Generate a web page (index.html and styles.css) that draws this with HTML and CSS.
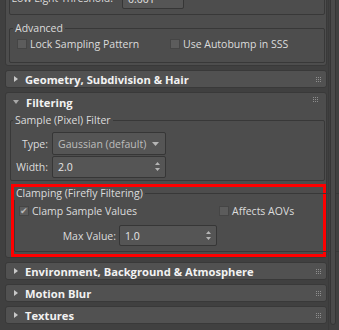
FILE: index.html
```html
<!DOCTYPE html>
<html>
<head>
<meta charset="utf-8">
<title>Render Setup - Filtering</title>
<link rel="stylesheet" href="styles.css">
</head>
<body>
<div class="panel">
	<div class="rollouts">
		<div class="rollout rollout-cut">
			<div class="group group-cut">
				<span class="label-low">Low Light Threshold:</span>
				<span class="field spinner-low">0.001</span>
			</div>
			<fieldset class="group group-advanced">
				<legend>Advanced</legend>
				<div class="check-row">
					<label class="check"><span class="box"></span>Lock Sampling Pattern</label>
					<label class="check"><span class="box"></span>Use Autobump in SSS</label>
				</div>
			</fieldset>
		</div>

		<div class="rollout header-only">
			<div class="header">
				<span class="arrow-right"></span>
				<span class="title">Geometry, Subdivision &amp; Hair</span>
				<svg class="grip" width="5" height="5" viewBox="0 0 5 5"><path d="M0 0h1v1H0zM2 0h1v1H2zM4 0h1v1H4zM0 2h1v1H0zM2 2h1v1H2zM4 2h1v1H4zM0 4h1v1H0zM2 4h1v1H2zM4 4h1v1H4z" fill="#8e8e8e"/></svg>
			</div>
		</div>

		<div class="rollout rollout-open">
			<div class="header">
				<span class="arrow-down"></span>
				<span class="title">Filtering</span>
				<svg class="grip grip-open" width="5" height="5" viewBox="0 0 5 5"><path d="M0 0h1v1H0zM2 0h1v1H2zM4 0h1v1H4zM0 2h1v1H0zM2 2h1v1H2zM4 2h1v1H4zM0 4h1v1H0zM2 4h1v1H2zM4 4h1v1H4z" fill="#8e8e8e"/></svg>
			</div>
			<fieldset class="group group-sample">
				<legend>Sample (Pixel) Filter</legend>
				<div class="form-row">
					<span class="label">Type:</span>
					<span class="field dropdown">Gaussian (default)
						<svg width="7" height="4" viewBox="0 0 7 4"><path d="M0 0h7L3.5 4z" fill="#b5b5b5"/></svg>
					</span>
				</div>
				<div class="form-row">
					<span class="label">Width:</span>
					<span class="field spinner">2.0
						<svg width="5" height="9" viewBox="0 0 5 9"><path d="M2.5 0L5 3H0z M0 6h5L2.5 9z" fill="#b5b5b5"/></svg>
					</span>
				</div>
			</fieldset>
			<div class="highlight">
				<fieldset class="group group-clamp">
					<legend>Clamping (Firefly Filtering)</legend>
					<div class="check-row">
						<label class="check"><span class="box">&#10004;</span>Clamp Sample Values</label>
						<label class="check check-aov"><span class="box"></span>Affects AOVs</label>
					</div>
					<div class="form-row max-row">
						<span class="label label-max">Max Value:</span>
						<span class="field spinner spinner-max">1.0
							<svg width="5" height="9" viewBox="0 0 5 9"><path d="M2.5 0L5 3H0z M0 6h5L2.5 9z" fill="#b5b5b5"/></svg>
						</span>
					</div>
				</fieldset>
			</div>
		</div>

		<div class="rollout header-only">
			<div class="header">
				<span class="arrow-right"></span>
				<span class="title">Environment, Background &amp; Atmosphere</span>
				<svg class="grip" width="5" height="5" viewBox="0 0 5 5"><path d="M0 0h1v1H0zM2 0h1v1H2zM4 0h1v1H4zM0 2h1v1H0zM2 2h1v1H2zM4 2h1v1H4zM0 4h1v1H0zM2 4h1v1H2zM4 4h1v1H4z" fill="#8e8e8e"/></svg>
			</div>
		</div>

		<div class="rollout header-only">
			<div class="header">
				<span class="arrow-right"></span>
				<span class="title">Motion Blur</span>
				<svg class="grip" width="5" height="5" viewBox="0 0 5 5"><path d="M0 0h1v1H0zM2 0h1v1H2zM4 0h1v1H4zM0 2h1v1H0zM2 2h1v1H2zM4 2h1v1H4zM0 4h1v1H0zM2 4h1v1H2zM4 4h1v1H4z" fill="#8e8e8e"/></svg>
			</div>
		</div>

		<div class="rollout header-only">
			<div class="header">
				<span class="arrow-right"></span>
				<span class="title">Textures</span>
				<svg class="grip" width="5" height="5" viewBox="0 0 5 5"><path d="M0 0h1v1H0zM2 0h1v1H2zM4 0h1v1H4zM0 2h1v1H0zM2 2h1v1H2zM4 2h1v1H4zM0 4h1v1H0zM2 4h1v1H2zM4 4h1v1H4z" fill="#8e8e8e"/></svg>
			</div>
		</div>
	</div>
	<div class="scrollbar">
		<div class="thumb"></div>
	</div>
</div>
</body>
</html>
```

FILE: styles.css
```css
body {
	margin: 0;
	background-color: #404040;
	font-family: "Open Sans", "Noto Sans", sans-serif;
	font-size: 10.5px;
	color: #dcdcdc;
	width: 339px;
	height: 330px;
	overflow: hidden;
}

.panel {
	display: flex;
	height: 330px;
}

.rollouts {
	width: 322px;
	margin-left: 5px;
	display: flex;
	flex-direction: column;
	gap: 4px;
}

.rollout {
	background-color: #4d4d4d;
	border: 1px solid #393939;
	border-radius: 3px;
	box-sizing: border-box;
	flex: none;
}

.rollout-cut {
	margin-top: -30px;
	padding: 0 1px 2px 3px;
}

.header {
	display: flex;
	align-items: center;
	height: 16px;
	background-color: #515151;
	border-radius: 3px;
	font-weight: bold;
	font-size: 11.2px;
	color: #f2f2f2;
}

.title {
	flex: 1;
	margin-left: 7px;
}

.arrow-right {
	margin-left: 8px;
	width: 0;
	height: 0;
	border-top: 3px solid transparent;
	border-bottom: 3px solid transparent;
	border-left: 4px solid #c8c8c8;
}

.arrow-down {
	margin-left: 7px;
	width: 0;
	height: 0;
	border-left: 3px solid transparent;
	border-right: 3px solid transparent;
	border-top: 4px solid #a8a8a8;
}

.grip {
	margin-right: 5px;
}

.grip-open {
	margin-right: 8px;
	align-self: flex-start;
	margin-top: 4px;
}

.group {
	border: 1px solid #383838;
	border-radius: 2px;
	margin: 0;
	padding: 0;
	box-sizing: border-box;
}

.group legend {
	padding: 0 2px;
	line-height: 13px;
}

.group-cut {
	height: 44px;
	display: flex;
	align-items: flex-end;
	padding-bottom: 5px;
}

.label-low {
	width: 103px;
	margin-right: 9px;
	margin-bottom: 4px;
	text-align: right;
	white-space: nowrap;
}

.spinner-low {
	width: 62px;
	height: 21px;
}

.group-advanced {
	margin-top: 7px;
	height: 41px;
	padding: 3px 0 0 7px;
}

.group-advanced legend {
	margin-left: -4px;
}

.check-row {
	display: flex;
	align-items: center;
	height: 12px;
}

.check {
	display: flex;
	align-items: center;
	gap: 3px;
	width: 153px;
	white-space: nowrap;
}

.check-aov {
	margin-left: 47px;
}

.box {
	width: 10px;
	height: 10px;
	box-sizing: border-box;
	background-color: #5c5c5c;
	border: 1px solid #454545;
	font-size: 9px;
	line-height: 8px;
	text-align: center;
	color: #b8b8b8;
}

.field {
	display: flex;
	align-items: center;
	box-sizing: border-box;
	background-color: #555555;
	border: 1px solid #363636;
	border-radius: 2px;
	padding-left: 5px;
	color: #e6e6e6;
}

.rollout-open {
	padding: 0 1px 0 4px;
}

.rollout-open .header {
	margin-left: -4px;
	margin-right: -1px;
	background-color: transparent;
	height: 18px;
}

.group-sample {
	margin-top: 3px;
	height: 67px;
	padding: 5px 0 0 0;
}

.group-sample legend {
	margin-left: 2px;
}

.form-row {
	display: flex;
	align-items: center;
	height: 23px;
}

.label {
	width: 37px;
	text-align: right;
	margin-right: 4px;
	white-space: nowrap;
}

.dropdown {
	width: 114px;
	height: 23px;
	color: #bdbdbd;
	justify-content: space-between;
	padding-right: 6px;
}

.spinner {
	width: 114px;
	height: 22px;
	justify-content: space-between;
	padding-right: 5px;
}

.highlight {
	margin: 3px -1px 0 1px;
	border: 3px solid #ff0000;
	padding: 0 1px 2px 0;
	height: 73px;
	box-sizing: border-box;
}

.group-clamp {
	height: 65px;
	padding: 5px 0 0 4px;
}

.group-clamp legend {
	margin-left: -5px;
}

.max-row {
	margin-top: 8px;
	height: 21px;
}

.label-max {
	width: 97px;
	margin-right: 3px;
}

.spinner-max {
	width: 98px;
	height: 21px;
}

.scrollbar {
	width: 12px;
	margin-left: 1px;
	border-left: 1px solid #3a3a3a;
	box-sizing: border-box;
}

.thumb {
	width: 6px;
	margin-left: 1px;
	margin-top: -10px;
	height: 335px;
	background-color: #4a4a4a;
	border: 1px solid #353535;
	border-radius: 3px;
	box-sizing: border-box;
}
```
